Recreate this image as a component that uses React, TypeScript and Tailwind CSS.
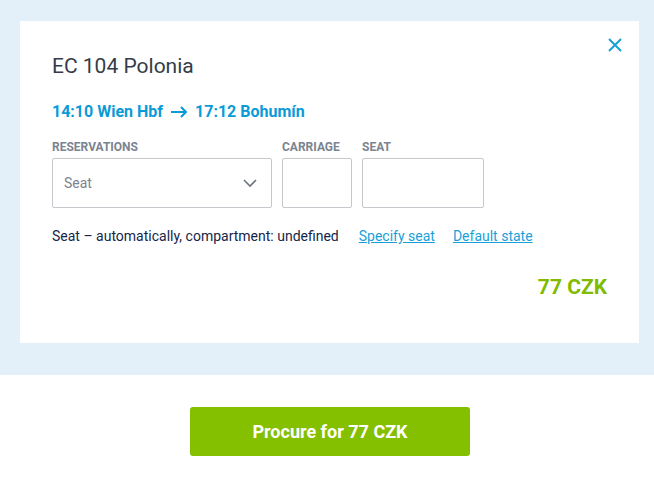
import React from 'react'

const Field: React.FC<{ label: string; width: string; children?: React.ReactNode }> = ({ label, width, children }) => (
  <div className={`flex flex-col ${width}`}>
    <span className="text-[12px] font-bold uppercase text-[#7b8491] leading-none mb-[5px]">{label}</span>
    <div className="h-[50px] border border-[#c4c8cc] rounded-[2px] bg-white flex items-center">{children}</div>
  </div>
)

export default function App() {
  return (
    <div className="w-[654px] h-[487px] bg-white font-['Roboto',sans-serif]">
      <div className="bg-[#e3f0fa] h-[375px] pt-[21px] pl-[20px] pr-[15px]">
        <div className="bg-white h-[322px] relative pl-[32px] pr-[32px] pt-[35px]">
          <button className="absolute right-[15px] top-[15px] text-[#1a9fd8]">
            <svg width="18" height="18" viewBox="0 0 18 18" fill="none" stroke="currentColor" strokeWidth="2">
              <path d="M3 3 L15 15 M15 3 L3 15" />
            </svg>
          </button>
          <h1 className="text-[21px] text-[#333c49] leading-none">EC 104 Polonia</h1>
          <div className="mt-[27px] flex items-center text-[16px] font-bold text-[#0a9bd7] leading-none">
            <span>14:10 Wien Hbf</span>
            <svg className="mx-[7px]" width="18" height="12" viewBox="0 0 18 12" fill="none" stroke="currentColor" strokeWidth="2">
              <path d="M1 6 H16 M11 1 L16 6 L11 11" />
            </svg>
            <span>17:12 Bohumín</span>
          </div>
          <div className="mt-[21px] flex gap-[10px]">
            <Field label="Reservations" width="w-[220px]">
              <div className="flex w-full items-center justify-between pl-[11px] pr-[13px]">
                <span className="text-[14px] text-[#7b8491]">Seat</span>
                <svg width="16" height="10" viewBox="0 0 16 10" fill="none" stroke="#6b7480" strokeWidth="1.6">
                  <path d="M2 2 L8 8 L14 2" />
                </svg>
              </div>
            </Field>
            <Field label="Carriage" width="w-[70px]" />
            <Field label="Seat" width="w-[122px]" />
          </div>
          <div className="mt-[21px] flex items-center text-[14px] leading-none">
            <span className="text-[#14264a]">Seat – automatically, compartment: undefined</span>
            <a className="ml-[20px] text-[#1a9fd8] underline">Specify seat</a>
            <a className="ml-[18px] text-[#1a9fd8] underline">Default state</a>
          </div>
          <div className="mt-[29px] flex justify-end">
            <span className="text-[21px] font-bold text-[#80bb00]">77 CZK</span>
          </div>
        </div>
      </div>
      <div className="flex justify-center pt-[32px] pl-[6px]">
        <button className="w-[280px] h-[49px] rounded-[3px] bg-[#84bf00] text-white font-bold text-[18px]">
          Procure for 77 CZK
        </button>
      </div>
    </div>
  )
}
